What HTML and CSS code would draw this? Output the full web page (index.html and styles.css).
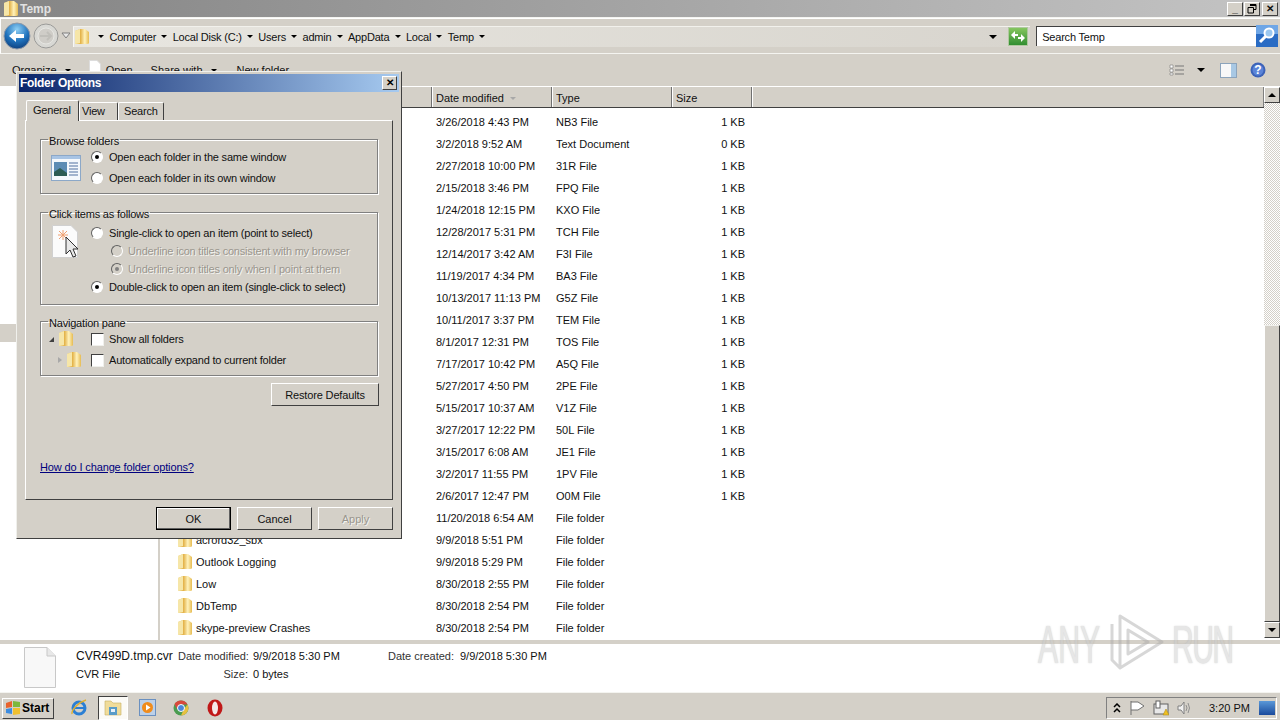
FILE: index.html
```html
<!DOCTYPE html>
<html lang="en">
<head>
  <meta charset="UTF-8">
  <link rel="stylesheet" href="styles.css">
  <title>Temp</title>
</head>
<body>
  <svg class="defs" width="0" height="0">
    <defs>
      <linearGradient id="fold" x1="0" y1="0" x2="1" y2="0">
        <stop offset="0" stop-color="#efcf78"/>
        <stop offset="0.4" stop-color="#e4b44c"/>
        <stop offset="0.7" stop-color="#fff2bc"/>
        <stop offset="1" stop-color="#e6bb52"/>
      </linearGradient>
      <symbol id="folder" viewBox="0 0 16 18">
        <path d="M1 3 L6 1 H11 L15 4 V15 Q15 16 13 16 H3 Q1 16 1 15 Z" fill="url(#fold)"/>
        <path d="M1 3 L6 1 V15 L1 16 Z" fill="#f6e6a8"/>
      </symbol>
      <radialGradient id="blueball" cx="0.5" cy="0.25" r="0.8">
        <stop offset="0" stop-color="#8fd0f5"/>
        <stop offset="0.55" stop-color="#2073bd"/>
        <stop offset="1" stop-color="#0b3a78"/>
      </radialGradient>
      <linearGradient id="gobtn" x1="0" y1="0" x2="0" y2="1">
        <stop offset="0" stop-color="#88c860"/>
        <stop offset="1" stop-color="#2e8c30"/>
      </linearGradient>
    </defs>
  </svg>

  <header class="titlebar">
    <svg class="ico16"><use href="#folder"/></svg>
    <span class="title-text">Temp</span>
    <div class="winbtns">
      <span class="winbtn">_</span>
      <span class="winbtn"><svg width="10" height="10" viewBox="0 0 10 10"><path d="M3 .5h6v5H7M1 3.500h5.500v5.500H1zM3 1.500h6" fill="none" stroke="#000"/></svg></span>
      <span class="winbtn winbtn-x">✕</span>
    </div>
  </header>

  <div class="addressbar">
    <svg class="nav-back" width="28" height="28" viewBox="0 0 28 28">
      <circle cx="14" cy="14" r="13" fill="url(#blueball)" stroke="#8c98a8"/>
      <path d="M6 14 L13 8 V12 H21 V16 H13 V20 Z" fill="#fff"/>
    </svg>
    <svg class="nav-forward" width="26" height="26" viewBox="0 0 26 26">
      <circle cx="13" cy="13" r="12" fill="#d8d8d4" stroke="#9a9a98"/>
      <circle cx="13" cy="13" r="8" fill="#cfcdc8" stroke="#e6e6e2"/>
      <path d="M7 13 H18 M14 9 L18 13 L14 17" fill="none" stroke="#c0bfba" stroke-width="2"/>
    </svg>
    <svg class="nav-drop" width="10" height="8" viewBox="0 0 10 8"><path d="M1 1 L5 6 L9 1 Z" fill="#e8e8e8" stroke="#808080"/></svg>
    <div class="crumbs">
      <svg class="ico16 crumb-folder"><use href="#folder"/></svg>
      <span class="arrow crumb-first"></span><span>Computer</span>
      <span class="arrow"></span><span>Local Disk (C:)</span>
      <span class="arrow"></span><span>Users</span>
      <span class="arrow"></span><span>admin</span>
      <span class="arrow"></span><span>AppData</span>
      <span class="arrow"></span><span>Local</span>
      <span class="arrow"></span><span>Temp</span>
      <span class="arrow"></span>
      <span class="arrow crumb-drop"></span>
    </div>
    <svg class="go-btn" width="20" height="19" viewBox="0 0 20 19">
      <rect x="0.500" y="0.500" width="19" height="18" fill="url(#gobtn)" stroke="#b0c8a0"/>
      <path d="M3 8 L7 4 V7 H10 V9 H7 V12 Z M17 11 L13 15 V12 H10 V10 H13 V7 Z" fill="#fff"/>
    </svg>
    <div class="search-box">Search Temp</div>
    <svg class="search-btn" width="22" height="22" viewBox="0 0 22 22">
      <rect width="22" height="22" fill="#2a6cc4"/>
      <rect width="22" height="9" fill="#6ea6e6"/>
      <circle cx="13" cy="8" r="4.500" fill="#9cc8f0" stroke="#fff" stroke-width="2"/>
      <path d="M9.500 11.500 L4 17" stroke="#fff" stroke-width="3"/>
    </svg>
  </div>

  <div class="toolbar">
    <span class="tool tool-organize">Organize</span><span class="arrow tool-arrow"></span>
    <svg class="tool-doc" width="12" height="16" viewBox="0 0 12 16"><path d="M.5.500H8L11.500 4V15.500H.5Z" fill="#fff" stroke="#ddd"/></svg>
    <span class="tool tool-open">Open</span>
    <span class="tool tool-share">Share with</span><span class="arrow tool-arrow"></span>
    <span class="tool tool-new">New folder</span>
    <svg class="tool-view" width="15" height="12" viewBox="0 0 15 12">
      <path d="M1 1h3v3H1zM1 5h3v3H1zM1 9h3v2H1z" fill="#fff" stroke="#777" stroke-width=".6"/>
      <path d="M6 2h9M6 6h9M6 10h9" stroke="#777"/>
    </svg>
    <span class="arrow tool-viewarrow"></span>
    <svg class="tool-pane" width="17" height="15" viewBox="0 0 17 15">
      <rect x=".5" y=".5" width="16" height="14" fill="#f8f8f8" stroke="#8ca4bc"/>
      <rect x="11" y="1" width="5" height="13" fill="#a8c8e4"/>
    </svg>
    <svg class="tool-help" width="16" height="16" viewBox="0 0 16 16">
      <circle cx="8" cy="8" r="7.500" fill="#3b62b8"/>
      <circle cx="8" cy="8" r="5.500" fill="#5b84d8"/>
      <text x="8" y="12" text-anchor="middle" class="help-mark">?</text>
    </svg>
  </div>

  <main class="explorer">
    <nav class="navpane">
      <div class="nav-selected"></div>
    </nav>
    <section class="filelist">
      <div class="list-head">
        <span class="hcol hcol-name"></span>
        <span class="hcol hcol-date">Date modified <i class="sort-mark"></i></span>
        <span class="hcol hcol-type">Type</span>
        <span class="hcol hcol-size">Size</span>
        <span class="hcol hcol-rest"></span>
      </div>
      <div class="rows">
        <div class="row"><span></span><span>3/26/2018 4:43 PM</span><span>NB3 File</span><span class="size">1 KB</span></div>
        <div class="row"><span></span><span>3/2/2018 9:52 AM</span><span>Text Document</span><span class="size">0 KB</span></div>
        <div class="row"><span></span><span>2/27/2018 10:00 PM</span><span>31R File</span><span class="size">1 KB</span></div>
        <div class="row"><span></span><span>2/15/2018 3:46 PM</span><span>FPQ File</span><span class="size">1 KB</span></div>
        <div class="row"><span></span><span>1/24/2018 12:15 PM</span><span>KXO File</span><span class="size">1 KB</span></div>
        <div class="row"><span></span><span>12/28/2017 5:31 PM</span><span>TCH File</span><span class="size">1 KB</span></div>
        <div class="row"><span></span><span>12/14/2017 3:42 AM</span><span>F3I File</span><span class="size">1 KB</span></div>
        <div class="row"><span></span><span>11/19/2017 4:34 PM</span><span>BA3 File</span><span class="size">1 KB</span></div>
        <div class="row"><span></span><span>10/13/2017 11:13 PM</span><span>G5Z File</span><span class="size">1 KB</span></div>
        <div class="row"><span></span><span>10/11/2017 3:37 PM</span><span>TEM File</span><span class="size">1 KB</span></div>
        <div class="row"><span></span><span>8/1/2017 12:31 PM</span><span>TOS File</span><span class="size">1 KB</span></div>
        <div class="row"><span></span><span>7/17/2017 10:42 PM</span><span>A5Q File</span><span class="size">1 KB</span></div>
        <div class="row"><span></span><span>5/27/2017 4:50 PM</span><span>2PE File</span><span class="size">1 KB</span></div>
        <div class="row"><span></span><span>5/15/2017 10:37 AM</span><span>V1Z File</span><span class="size">1 KB</span></div>
        <div class="row"><span></span><span>3/27/2017 12:22 PM</span><span>50L File</span><span class="size">1 KB</span></div>
        <div class="row"><span></span><span>3/15/2017 6:08 AM</span><span>JE1 File</span><span class="size">1 KB</span></div>
        <div class="row"><span></span><span>3/2/2017 11:55 PM</span><span>1PV File</span><span class="size">1 KB</span></div>
        <div class="row"><span></span><span>2/6/2017 12:47 PM</span><span>O0M File</span><span class="size">1 KB</span></div>
        <div class="row"><span></span><span>11/20/2018 6:54 AM</span><span>File folder</span><span></span></div>
        <div class="row"><span class="name"><svg class="ico16"><use href="#folder"/></svg>acrord32_sbx</span><span>9/9/2018 5:51 PM</span><span>File folder</span><span></span></div>
        <div class="row"><span class="name"><svg class="ico16"><use href="#folder"/></svg>Outlook Logging</span><span>9/9/2018 5:29 PM</span><span>File folder</span><span></span></div>
        <div class="row"><span class="name"><svg class="ico16"><use href="#folder"/></svg>Low</span><span>8/30/2018 2:55 PM</span><span>File folder</span><span></span></div>
        <div class="row"><span class="name"><svg class="ico16"><use href="#folder"/></svg>DbTemp</span><span>8/30/2018 2:54 PM</span><span>File folder</span><span></span></div>
        <div class="row"><span class="name"><svg class="ico16"><use href="#folder"/></svg>skype-preview Crashes</span><span>8/30/2018 2:54 PM</span><span>File folder</span><span></span></div>
      </div>
    </section>
    <div class="scrollbar">
      <span class="sb-btn"><span class="arrow arrow-up"></span></span>
      <span class="sb-track"></span>
      <span class="sb-thumb"></span>
      <span class="sb-btn"><span class="arrow"></span></span>
    </div>
  </main>

  <footer class="details">
    <svg class="details-icon" width="32" height="41" viewBox="0 0 32 41">
      <path d="M.5.500H23L31.500 9V40.500H.5Z" fill="#f8f8f8" stroke="#c8c8c8"/>
      <path d="M23 .5V9H31.500" fill="#e8e8e8" stroke="#c8c8c8"/>
    </svg>
    <div class="details-grid">
      <span class="file-name">CVR499D.tmp.cvr</span>
      <span class="meta meta-mod">Date modified:</span><span class="meta-val">9/9/2018 5:30 PM</span>
      <span class="meta meta-created">Date created:</span><span class="meta-val">9/9/2018 5:30 PM</span>
      <span class="file-type">CVR File</span>
      <span class="meta meta-size">Size:</span><span class="meta-val">0 bytes</span>
    </div>
  </footer>

  <div class="taskbar">
    <button class="start-btn">
      <svg width="16" height="16" viewBox="0 0 16 16">
        <path d="M1 3 L7 1 V7 L1 8 Z" fill="#e8622c"/>
        <path d="M8 1 L15 2 V7 L8 7 Z" fill="#7cb83c"/>
        <path d="M1 9 L7 8 V14 L1 13 Z" fill="#3c8ce0"/>
        <path d="M8 8 L15 8 V14 L8 15 Z" fill="#f0c030"/>
      </svg>
      Start
    </button>
    <div class="quick">
      <span class="qi">
        <svg width="18" height="18" viewBox="0 0 18 18">
          <circle cx="9" cy="9" r="6" fill="none" stroke="#2b7fd4" stroke-width="3"/>
          <path d="M4 9 H14" stroke="#2b7fd4" stroke-width="2"/>
          <path d="M2 15 C1 11 9 3 16 1" fill="none" stroke="#e0b030" stroke-width="1.500"/>
        </svg>
      </span>
      <span class="qi qi-active">
        <svg width="18" height="16" viewBox="0 0 18 16">
          <path d="M1 1 H7 L9 3 H17 V15 H1 Z" fill="#f0dc9a" stroke="#c8b060" stroke-width=".6"/>
          <path d="M5 7 H13 V15 H5 Z" fill="#5a9cc8"/>
          <path d="M7 9 H11 V12 H7 Z" fill="#e8f0f8"/>
        </svg>
      </span>
      <span class="qi">
        <svg width="17" height="17" viewBox="0 0 17 17">
          <rect x=".5" y=".5" width="16" height="16" fill="#bcd0e8" stroke="#6a90c0"/>
          <circle cx="8.500" cy="8.500" r="5.500" fill="#f08c1c"/>
          <path d="M7 5.500 L11.500 8.500 L7 11.500 Z" fill="#fff"/>
        </svg>
      </span>
      <span class="qi">
        <svg width="16" height="16" viewBox="0 0 16 16">
          <circle cx="8" cy="8" r="7.500" fill="#4a9c50"/>
          <path d="M8 .5 A7.500 7.500 0 0 1 14.500 4.500 L8 4.500 Z M1.500 4 A7.500 7.500 0 0 1 8 .5 L8 4.500 L4 9 Z" fill="#d8483c"/>
          <path d="M14.500 4.500 A7.500 7.500 0 0 1 8 15.500 L11 9 Z" fill="#e8c040"/>
          <circle cx="8" cy="8" r="3.500" fill="#4a86d8" stroke="#fff"/>
        </svg>
      </span>
      <span class="qi">
        <svg width="16" height="18" viewBox="0 0 16 18">
          <ellipse cx="8" cy="9" rx="7.500" ry="8.500" fill="#c01818"/>
          <ellipse cx="8" cy="9" rx="3" ry="6.500" fill="#f4e8e8"/>
        </svg>
      </span>
    </div>
    <div class="tray">
      <svg class="tray-chev" width="8" height="10" viewBox="0 0 8 10"><path d="M1 4 L4 1 L7 4 M1 9 L4 6 L7 9" fill="none" stroke="#000" stroke-width="1.500"/></svg>
      <svg class="tray-flag" width="16" height="16" viewBox="0 0 16 16"><path d="M2 1 V15 M2 2 H9 L15 6 L9 10 H2" fill="#fff" stroke="#707070"/></svg>
      <svg class="tray-net" width="16" height="16" viewBox="0 0 16 16">
        <rect x="1" y="4" width="14" height="10" fill="#e8e8e8" stroke="#606060"/>
        <rect x="3" y="1" width="4" height="7" fill="#fff" stroke="#606060"/>
        <path d="M10 15 L13 9 L16 15 Z" fill="#f0c020" stroke="#a08010" stroke-width=".5"/>
      </svg>
      <svg class="tray-sound" width="16" height="16" viewBox="0 0 16 16"><path d="M2 6 H5 L8 2 V14 L5 10 H2 Z" fill="#f0f0f0" stroke="#808080"/><path d="M10 5 Q12 8 10 11 M12 3 Q15 8 12 13" fill="none" stroke="#909090"/></svg>
      <span class="clock">3:20 PM</span>
      <span class="show-desktop"></span>
    </div>
  </div>

  <div class="watermark">
    <span class="wm-word wm-any">ANY</span>
    <svg width="60" height="64" viewBox="0 0 60 64">
      <path d="M6 14 V50 L14 58 V6 L56 32 L14 58" fill="none" stroke="#a8a8a8" stroke-width="3" stroke-linejoin="round"/>
      <path d="M22 20 V44 L42 32 Z" fill="none" stroke="#a8a8a8" stroke-width="3" stroke-linejoin="round"/>
    </svg>
    <span class="wm-word wm-run">RUN</span>
  </div>

  <div class="dialog">
    <div class="dlg-title">
      <span>Folder Options</span>
      <span class="dlg-close">✕</span>
    </div>
    <div class="tabs">
      <span class="tab tab-active">General</span>
      <span class="tab tab-view">View</span>
      <span class="tab">Search</span>
    </div>
    <div class="tabpanel">
      <fieldset class="group group-browse">
        <legend>Browse folders</legend>
        <svg class="grp-icon" width="30" height="26" viewBox="0 0 30 26">
          <rect x=".5" y=".5" width="29" height="25" fill="#f4f8fc" stroke="#8ca8c8"/>
          <rect x="3" y="7" width="13" height="14" fill="#5c8cb4"/>
          <path d="M3 17 L9 13 L16 18 V21 H3 Z" fill="#2c5c54"/>
          <path d="M18 8h9M18 11h9M18 14h9M18 17h9M18 20h9" stroke="#5070a0"/>
          <rect x="1" y="1" width="28" height="3" fill="#a8c4e4"/>
        </svg>
        <div class="opts">
          <label class="opt"><span class="radio checked"></span>Open each folder in the same window</label>
          <label class="opt"><span class="radio"></span>Open each folder in its own window</label>
        </div>
      </fieldset>
      <fieldset class="group group-click">
        <legend>Click items as follows</legend>
        <svg class="grp-icon" width="28" height="36" viewBox="0 0 28 36">
          <path d="M.5.500H19L25.500 7V32.500H.5Z" fill="#fbfbfb" stroke="#d0d0d0"/>
          <path d="M11 5 V15 M6 10 H16 M7 6 L15 14 M15 6 L7 14" stroke="#f0a070"/>
          <path d="M14 12 V29 L18 25 L21 32 L24 31 L21 24 L26 24 Z" fill="#e8e8e8" stroke="#303030"/>
        </svg>
        <div class="opts opts-tight">
          <label class="opt"><span class="radio"></span>Single-click to open an item (point to select)</label>
          <label class="opt opt-sub"><span class="radio radio-off"></span>Underline icon titles consistent with my browser</label>
          <label class="opt opt-sub"><span class="radio radio-off checked"></span>Underline icon titles only when I point at them</label>
          <label class="opt"><span class="radio checked"></span>Double-click to open an item (single-click to select)</label>
        </div>
      </fieldset>
      <fieldset class="group group-nav">
        <legend>Navigation pane</legend>
        <div class="nav-icons">
          <span class="nav-icon-row"><i class="tree tree-open"></i><svg class="ico16"><use href="#folder"/></svg></span>
          <span class="nav-icon-row nav-icon-row2"><i class="tree"></i><svg class="ico16"><use href="#folder"/></svg></span>
        </div>
        <div class="opts opts-nav">
          <label class="opt"><span class="check"></span>Show all folders</label>
          <label class="opt"><span class="check"></span>Automatically expand to current folder</label>
        </div>
      </fieldset>
      <div class="restore-row"><button class="btn btn-restore">Restore Defaults</button></div>
      <a class="help-link" href="#">How do I change folder options?</a>
    </div>
    <div class="dlg-buttons">
      <button class="btn btn-default">OK</button>
      <button class="btn">Cancel</button>
      <button class="btn btn-disabled">Apply</button>
    </div>
  </div>
</body>
</html>
```

FILE: styles.css
```css
* {
  box-sizing: border-box;
}

html, body {
  margin: 0;
  padding: 0;
}

body {
  width: 1280px;
  height: 720px;
  overflow: hidden;
  position: relative;
  display: flex;
  flex-direction: column;
  font-family: "Liberation Sans", Arial, sans-serif;
  font-size: 11px;
  line-height: 14px;
  color: #111;
  background: #d4d0c8;
}

.defs {
  position: absolute;
}

.ico16 {
  width: 16px;
  height: 18px;
  flex: none;
}

.arrow {
  display: inline-block;
  width: 0;
  height: 0;
  border-left: 3px solid transparent;
  border-right: 3px solid transparent;
  border-top: 3px solid #000;
  flex: none;
}

.arrow-up {
  border-top: 0;
  border-bottom: 3px solid #000;
}

/* title bar */
.titlebar {
  height: 18px;
  flex: none;
  display: flex;
  align-items: center;
  padding-left: 3px;
  background: linear-gradient(90deg, #858585, #c4c4c4);
  border-bottom: 1px solid #f4f4f0;
}

.title-text {
  margin-left: 1px;
  font-weight: 700;
  font-size: 12px;
  color: #e2e2e2;
}

.winbtns {
  margin-left: auto;
  margin-right: 2px;
  display: flex;
}

.winbtn {
  width: 16px;
  height: 14px;
  margin-left: 1px;
  display: flex;
  align-items: center;
  justify-content: center;
  background: #d4d0c8;
  border: 1px solid;
  border-color: #fff #404040 #404040 #fff;
  font-size: 10px;
  font-weight: 700;
  line-height: 10px;
}

.winbtn-x {
  margin-left: 2px;
}

/* address bar */
.addressbar {
  height: 36px;
  flex: none;
  display: flex;
  align-items: center;
  padding: 0 2px 0 3px;
  background: #d4d0c8;
  border-top: 1px solid #fff;
  border-bottom: 1px solid #f4f4f0;
  border-left: 1px solid #fff;
}

.nav-back {
  margin-left: -1px;
}

.nav-forward {
  margin-left: 2px;
}

.nav-drop {
  margin: 0 0 0 2px;
}

.crumbs {
  width: 958px;
  height: 21px;
  margin-left: 2px;
  display: flex;
  align-items: center;
  gap: 5.250px;
  background: linear-gradient(90deg, #e8e6e0, #d8d5ce);
  border-top: 1px solid #f2f1ec;
  border-left: 1px solid #f8f8f4;
  white-space: nowrap;
  letter-spacing: -.2px;
}

.crumb-first {
  margin-left: 3px;
}

.crumb-drop {
  margin-left: auto;
  margin-right: 33px;
  border-left-width: 4px;
  border-right-width: 4px;
  border-top-width: 4px;
}

.go-btn {
  margin-left: -22px;
}

.search-box {
  width: 220px;
  height: 20px;
  margin-left: 8px;
  padding: 3px 0 0 5px;
  background: #fff;
  border-top: 1px solid #404040;
  border-left: 1px solid #404040;
  letter-spacing: -.2px;
}

.search-btn {
  flex: none;
}

/* toolbar */
.toolbar {
  height: 32px;
  flex: none;
  display: flex;
  align-items: center;
  padding: 0 0 0 12px;
  background: #d4d0c8;
}

.tool-arrow {
  margin-left: 8px;
}

.tool-doc {
  margin: -4px 0 0 18px;
}

.tool-open {
  margin-left: 5px;
}

.tool-share {
  margin-left: 18px;
}

.tool-new {
  margin-left: 20px;
}

.tool-view {
  margin-left: auto;
}

.tool-viewarrow {
  margin-left: 13px;
  border-left-width: 4px;
  border-right-width: 4px;
  border-top-width: 4px;
}

.tool-pane {
  margin-left: 15px;
}

.tool-help {
  margin-left: 13px;
  margin-right: 14px;
}

.help-mark {
  font-size: 12px;
  font-weight: 700;
  fill: #fff;
}

/* main area */
.explorer {
  height: 554px;
  flex: none;
  display: flex;
  background: #fff;
  border-top: 1px solid #fff;
}

.navpane {
  width: 158px;
  flex: none;
  background: #fff;
}

.nav-selected {
  width: 16px;
  height: 18px;
  margin-top: 237px;
  background: #d4d0c8;
}

.filelist {
  width: 1106px;
  flex: none;
  border-left: 2px solid #d4d0c8;
}

.list-head {
  height: 21px;
  display: flex;
  background: #d4d0c8;
  border-bottom: 1px solid #404040;
}

.hcol {
  padding: 4px 0 0 4px;
  border-right: 1px solid #707070;
  box-shadow: 1px 0 0 #fff;
}

.hcol-name {
  width: 272px;
}

.hcol-date,
.hcol-type {
  width: 120px;
}

.hcol-size {
  width: 80px;
}

.hcol-rest {
  flex: 1;
  border-right: 1px solid #808080;
}

.sort-mark {
  display: inline-block;
  width: 0;
  height: 0;
  margin: 0 0 2px 3px;
  border-left: 3px solid transparent;
  border-right: 3px solid transparent;
  border-top: 3px solid #a8a8a8;
}

.rows {
  padding-top: 3px;
}

.row {
  height: 22px;
  display: grid;
  grid-template-columns: 272px 120px 120px 73px;
  align-items: center;
}

.row > span {
  padding-left: 4px;
  white-space: nowrap;
}

.row .name {
  display: flex;
  align-items: center;
  gap: 3px;
  padding-left: 17px;
}

.row .size {
  text-align: right;
}

.scrollbar {
  width: 16px;
  flex: none;
  display: flex;
  flex-direction: column;
}

.sb-btn {
  height: 16px;
  flex: none;
  display: flex;
  align-items: center;
  justify-content: center;
  background: #d4d0c8;
  border: 1px solid;
  border-color: #fff #404040 #404040 #fff;
}

.sb-btn .arrow {
  border-left-width: 4px;
  border-right-width: 4px;
  border-top-width: 4px;
}

.sb-btn .arrow-up {
  border-top-width: 0;
  border-bottom-width: 4px;
}

.sb-track {
  height: 222px;
  flex: none;
  background: repeating-conic-gradient(#d4d0c8 0 25%, #fff 0 50%) 0 0 / 2px 2px;
}

.sb-thumb {
  height: 297px;
  flex: none;
  background: #d4d0c8;
  border: 1px solid;
  border-color: #f0f0ec #404040 #404040 #fff;
}

/* details pane */
.details {
  height: 52px;
  flex: none;
  display: flex;
  background: #fff;
  border-top: 4px solid #d4d0c8;
}

.details-icon {
  margin: 3px 0 0 24px;
}

.details-grid {
  margin: 3px 0 0 20px;
  display: grid;
  grid-template-columns: 102px 75px 135px 72px 120px;
  grid-auto-rows: 18px;
  align-items: center;
  white-space: nowrap;
}

.file-name {
  font-size: 12px;
}

.meta {
  color: #333;
}

.meta-size {
  grid-column: 2;
  text-align: right;
  padding-right: 5px;
}

/* taskbar */
.taskbar {
  height: 28px;
  flex: none;
  display: flex;
  align-items: center;
  padding: 3px 3px 0 2px;
  background: #d4d0c8;
  border-top: 1px solid #f4f4f0;
}

.start-btn {
  width: 52px;
  height: 21px;
  display: flex;
  align-items: center;
  gap: 1px;
  padding: 0 0 0 2px;
  background: #d4d0c8;
  border: 1px solid;
  border-color: #fff #404040 #404040 #fff;
  font-family: inherit;
  font-size: 12px;
  font-weight: 700;
}

.quick {
  display: flex;
  align-items: center;
  margin-left: 8px;
}

.qi {
  width: 34px;
  height: 24px;
  display: flex;
  align-items: center;
  justify-content: center;
  margin-top: -1px;
}

.qi-active {
  width: 30px;
  margin: 0 2px;
  background: #fbfaf6;
  border: 1px solid;
  border-color: #404040 #fff #fff #404040;
}

.tray {
  width: 171px;
  height: 22px;
  margin-left: auto;
  display: flex;
  align-items: center;
  padding-left: 6px;
  border: 1px solid;
  border-color: #808080 #fff #fff #808080;
}

.tray-flag {
  margin-left: 8px;
}

.tray-net {
  margin-left: 8px;
}

.tray-sound {
  margin-left: 7px;
}

.clock {
  margin-left: 17px;
}

.show-desktop {
  width: 16px;
  height: 14px;
  margin-left: auto;
  margin-right: 1px;
  background: linear-gradient(#5a98d8, #1a4a9c);
}

/* watermark over the window */
.watermark {
  position: absolute;
  left: 1038px;
  top: 608px;
  width: 194px;
  display: flex;
  align-items: center;
  justify-content: space-between;
  opacity: .45;
  pointer-events: none;
  font-size: 54px;
  line-height: 64px;
  color: #c8c8c8;
}

.wm-word {
  display: block;
  padding-top: 4px;
  transform: scaleX(.56);
  transform-origin: left center;
  text-shadow: 0 0 2px #999;
}

.wm-any {
  width: 62px;
}

.wm-run {
  width: 60px;
  letter-spacing: -3px;
}

/* dialog */
.dialog {
  position: absolute;
  left: 16px;
  top: 71px;
  width: 386px;
  height: 468px;
  padding: 2px;
  background: #d4d0c8;
  border: 1px solid;
  border-color: #f0f0ec #404040 #404040 #f0f0ec;
}

.dlg-title {
  height: 18px;
  display: flex;
  align-items: center;
  justify-content: space-between;
  padding: 0 2px 0 1px;
  background: linear-gradient(90deg, #0a246a, #a6caf0);
  color: #fff;
  font-weight: 700;
  font-size: 12px;
  letter-spacing: -.3px;
}

.dlg-close {
  width: 15px;
  height: 14px;
  display: flex;
  align-items: center;
  justify-content: center;
  background: #d4d0c8;
  color: #000;
  border: 1px solid;
  border-color: #fff #404040 #404040 #fff;
  font-size: 10px;
  line-height: 10px;
}

.tabs {
  height: 21px;
  margin: 7px 0 0 7px;
  display: flex;
  align-items: flex-end;
  position: relative;
  z-index: 1;
}

.tab {
  height: 18px;
  padding: 1px 5px 0 5px;
  background: #d4d0c8;
  border-top: 1px solid #fff;
  border-left: 1px solid #fff;
  border-right: 1px solid #404040;
  border-radius: 2px 2px 0 0;
  min-width: 38px;
  letter-spacing: -.2px;
}

.tab:last-child {
  min-width: 46px;
}

.tab-view {
  min-width: 39px;
  padding-left: 2px;
}

.tab-active {
  width: 53px;
  height: 21px;
  padding: 2px 0 0 6px;
  margin-bottom: -1px;
}

.tabpanel {
  width: 368px;
  height: 380px;
  margin-left: 6px;
  padding: 9px 14px 0 14px;
  border: 1px solid;
  border-color: #fff #404040 #404040 #fff;
}

.group {
  position: relative;
  margin: 0;
  padding: 0;
  display: flex;
  border: 1px solid #808080;
  box-shadow: 1px 1px 0 #fff, inset 1px 1px 0 #fff;
}

.group legend {
  margin-left: 7px;
  padding: 4px 1px 0 1px;
  height: 18px;
  letter-spacing: -.2px;
}

.group-browse {
  height: 64px;
}

.group-click {
  height: 102px;
  margin-top: 9px;
}

.group-nav {
  height: 64px;
  margin-top: 7px;
}

.grp-icon {
  flex: none;
  margin: 7px 0 0 10px;
}

.group-click .grp-icon {
  margin: 4px 0 0 11px;
}

.opts {
  display: flex;
  flex-direction: column;
  gap: 7px;
  margin: 2px 0 0 9px;
  letter-spacing: -.2px;
}

.group-click .opts-tight {
  gap: 4px;
  margin-top: 5px;
  margin-left: 10px;
}

.group-nav .opts-nav {
  margin: 2px 0 0 9px;
}

.opt {
  display: flex;
  align-items: center;
  gap: 6px;
  height: 14px;
  white-space: nowrap;
}

.opt-sub {
  gap: 5px;
  padding-left: 20px;
  color: #9a968e;
  text-shadow: 1px 1px 0 #f4f4f0;
}

.radio {
  width: 12px;
  height: 12px;
  flex: none;
  margin-left: 1px;
  display: flex;
  align-items: center;
  justify-content: center;
  border-radius: 50%;
  background: #fff;
  border: 1px solid;
  border-color: #606060 #fff #fff #606060;
}

.radio.checked::after {
  content: "";
  width: 4px;
  height: 4px;
  border-radius: 50%;
  background: #000;
}

.radio-off {
  background: #d4d0c8;
}

.radio-off.checked::after {
  background: #808080;
}

.check {
  width: 13px;
  height: 13px;
  flex: none;
  margin-right: -1px;
  background: #fff;
  border: 1px solid;
  border-color: #404040 #f0f0ec #f0f0ec #404040;
}

.nav-icons {
  width: 41px;
  flex: none;
  display: flex;
  flex-direction: column;
  gap: 3px;
  padding-left: 8px;
}

.nav-icon-row {
  display: flex;
  align-items: center;
  height: 18px;
}

.nav-icon-row2 {
  padding-left: 9px;
}

.tree {
  width: 0;
  height: 0;
  margin-right: 4px;
  border-top: 3px solid transparent;
  border-bottom: 3px solid transparent;
  border-left: 4px solid #a8a8a8;
}

.tree-open {
  border-top: 0;
  border-left: 5px solid transparent;
  border-bottom: 5px solid #404040;
}

.restore-row {
  display: flex;
  justify-content: flex-end;
  margin: 7px -1px 0 0;
}

.btn {
  width: 75px;
  height: 23px;
  padding: 0;
  background: #d4d0c8;
  border: 1px solid;
  border-color: #fff #404040 #404040 #fff;
  font-family: inherit;
  font-size: 11px;
  color: #111;
}

.btn-restore {
  width: 108px;
  letter-spacing: -.15px;
}

.btn-default {
  outline: 1px solid #000;
  outline-offset: -1px;
  border-color: #000;
  box-shadow: inset -1px -1px 0 #606060, inset 1px 1px 0 #fff;
}

.btn-disabled {
  color: #9a968e;
  text-shadow: 1px 1px 0 #f4f4f0;
}

.help-link {
  display: block;
  margin-top: 54px;
  color: #00007e;
  letter-spacing: -.13px;
}

.dlg-buttons {
  display: flex;
  justify-content: flex-end;
  gap: 6px;
  margin-top: 7px;
  padding-right: 6px;
}
```
